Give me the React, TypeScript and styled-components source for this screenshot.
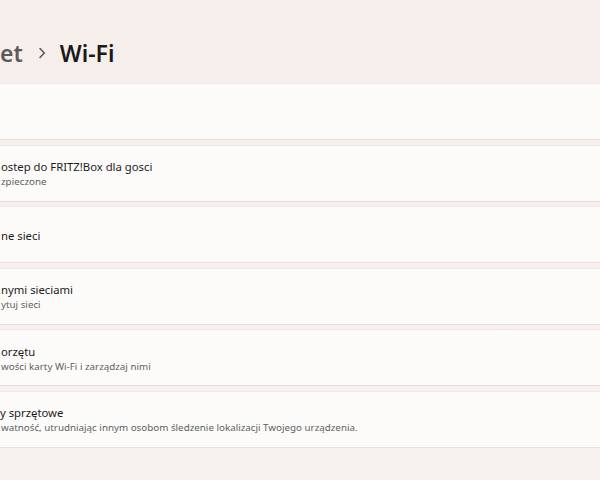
import React from "react";
import styled, { createGlobalStyle } from "styled-components";

const Global = createGlobalStyle`
  html, body { margin: 0; padding: 0; }
  body {
    width: 600px;
    height: 480px;
    overflow: hidden;
    background: linear-gradient(180deg, #f6eeea 0%, #f7f0ec 60%, #f8f2ef 100%);
    font-family: "Noto Sans", "Open Sans", Arial, sans-serif;
    color: #1b1b1b;
  }
`;

const Page = styled.div`
  display: flex;
  flex-direction: column;
  width: 600px;
  height: 480px;
`;

const Breadcrumb = styled.div`
  display: flex;
  align-items: center;
  height: 34px;
  margin-top: 36px;
  margin-bottom: 13px;
  white-space: nowrap;
  font-size: 23px;
  font-weight: 600;
  line-height: 34px;
`;

const Crumb = styled.span<{ $current?: boolean }>`
  display: inline-flex;
  align-items: center;
  color: ${(p) => (p.$current ? "#1a1a1a" : "#5e5a58")};
`;

const Sep = styled.span`
  display: inline-flex;
  align-items: center;
  margin: 0 14px 0 15px;
`;

const List = styled.div`
  display: flex;
  flex-direction: column;
  gap: 4.5px;
`;

const Card = styled.div`
  height: 57px;
  margin: 0 -20px;
  padding: 2px 20px 0;
  box-sizing: border-box;
  background: #fcfbfa;
  border: 1px solid #ece9e7;
  border-bottom-color: #e2dfdd;
  display: flex;
  flex-direction: column;
  justify-content: center;
`;

const Title = styled.div<{ $shift?: number }>`
  font-size: 11.3px;
  line-height: 15px;
  color: #1c1c1c;
  white-space: nowrap;
  margin-left: ${(p) => p.$shift ?? 0}px;
`;

const Sub = styled.div<{ $shift?: number }>`
  font-size: 9.8px;
  line-height: 15px;
  color: #5f5f5f;
  white-space: nowrap;
  margin-left: ${(p) => p.$shift ?? 0}px;
`;

type Row = {
  t?: string;
  s?: string;
  ts?: number;
  ss?: number;
};

const rows: Row[] = [
  {},
  { t: "ostep do FRITZ!Box dla gosci", s: "zpieczone" },
  { t: "ne sieci" },
  { t: "nymi sieciami", s: "ytuj sieci" },
  { t: "orzętu", s: "wości karty Wi-Fi i zarządzaj nimi" },
  {
    t: "y sprzętowe",
    ts: -1,
    s: "watność, utrudniając innym osobom śledzenie lokalizacji Twojego urządzenia.",
  },
];

export default function App() {
  return (
    <>
      <Global />
      <Page>
        <Breadcrumb>
          <Crumb>et</Crumb>
          <Sep>
            <svg width="8" height="12" viewBox="0 0 8 12">
              <path d="M2 1.5 L6.3 6 L2 10.5" fill="none" stroke="#5e5a58" strokeWidth="1.6" strokeLinecap="round" strokeLinejoin="round" />
            </svg>
          </Sep>
          <Crumb $current>Wi-Fi</Crumb>
        </Breadcrumb>
        <List>
          {rows.map((r, i) => (
            <Card key={i}>
              {r.t && <Title $shift={r.ts}>{r.t}</Title>}
              {r.s && <Sub $shift={r.ss}>{r.s}</Sub>}
            </Card>
          ))}
        </List>
      </Page>
    </>
  );
}
